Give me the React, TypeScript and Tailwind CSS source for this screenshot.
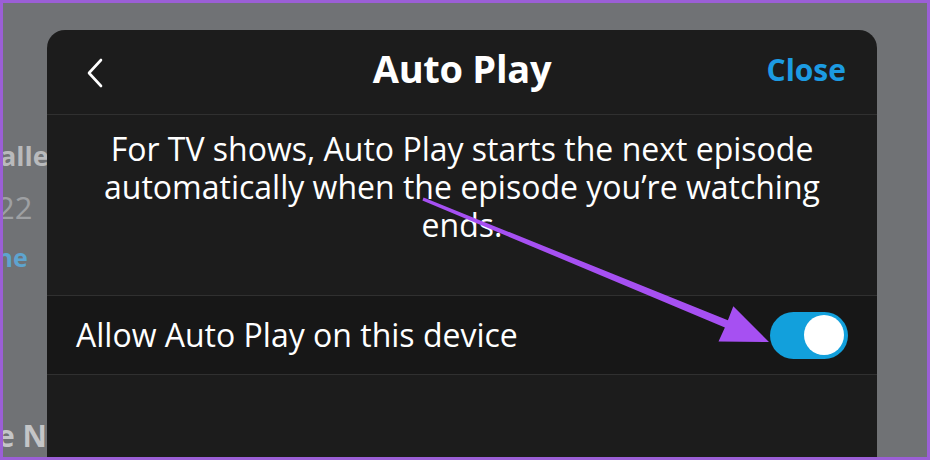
import React from 'react';

const font = { fontFamily: '"Open Sans", "Noto Sans", Arial, sans-serif' };

function Arrow() {
  // purple annotation arrow drawn over the dialog
  return (
    <svg className="absolute left-0 top-0 pointer-events-none" width="930" height="460" viewBox="0 0 930 460">
      <polygon
        points="420.6,194.6 724.9,317.2 730.3,303.2 766,339 715.5,338.5 721.9,324.6 419.4,197.4"
        fill="#a650f2"
      />
    </svg>
  );
}

export default function App() {
  return (
    <div className="relative w-[930px] h-[460px] overflow-hidden border-[3px] border-[#9b5fd6] bg-[#707275]" style={font}>
      {/* page behind the dialog */}
      <div className="flex flex-col">
        <div className="mt-[133px] -ml-[3px] text-[27px] font-bold leading-[40px] text-[#b9babc] whitespace-nowrap">allenge</div>
        <div className="mt-[10px] -ml-[6px] text-[31px] leading-[42px] text-[#9ea0a3]">22</div>
        <div className="mt-[12px] -ml-[22px] text-[25px] font-bold leading-[34px] text-[#5ea4cf]">one</div>
        <div className="mt-[142px] -ml-[6px] text-[30px] font-bold leading-[40px] text-[#c4c5c7] whitespace-nowrap">e Next</div>
      </div>

      {/* dialog */}
      <div className="absolute left-[44px] top-[27px] w-[830px] h-[500px] rounded-t-[18px] bg-[#1c1c1c] flex flex-col">
        <div className="relative h-[85px] flex items-center justify-center pb-[8px] border-b border-[#303030]">
          <svg className="absolute left-[38px] top-[28px]" width="22" height="30" viewBox="0 0 22 30">
            <path d="M16 2 L4 15 L16 28" fill="none" stroke="#ffffff" strokeWidth="2.6" strokeLinecap="round" strokeLinejoin="round" />
          </svg>
          <span className="text-[38px] font-bold text-white tracking-[-0.3px]">Auto Play</span>
          <span className="absolute right-[31px] top-[17px] text-[30px] font-bold text-[#1c9be2]">Close</span>
        </div>
        <p className="pt-[15px] pb-[51px] px-[30px] text-center text-[32px] leading-[38px] text-white whitespace-nowrap">
          For TV shows, Auto Play starts the next episode
          <br />
          automatically when the episode you’re watching
          <br />
          ends.
        </p>
        <div className="h-[80px] flex items-center justify-between px-[29px] bg-[#171717] border-y border-[#303030]">
          <span className="text-[32px] text-white">Allow Auto Play on this device</span>
          <div className="w-[78px] h-[47px] rounded-full bg-[#12a0dc] flex items-center justify-end pr-[4px]">
            <div className="w-[40px] h-[40px] rounded-full bg-white" />
          </div>
        </div>
      </div>

      <Arrow />
    </div>
  );
}
